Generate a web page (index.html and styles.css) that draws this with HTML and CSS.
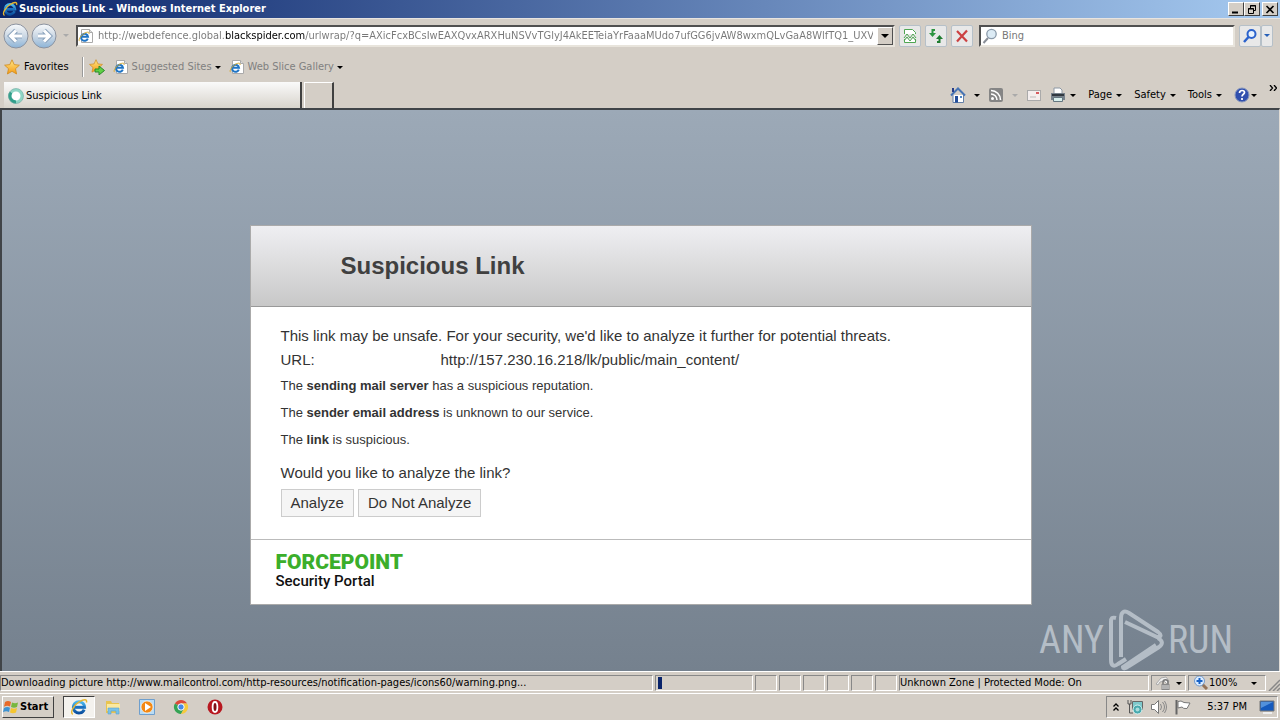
FILE: index.html
```html
<!DOCTYPE html>
<html lang="en">
<head>
    <meta charset="UTF-8">
    <meta name="viewport" content="width=device-width, initial-scale=1.0">
    <title>Suspicious Link - Windows Internet Explorer</title>
    <link rel="stylesheet" href="styles.css">
</head>
<body>
    <!-- shared icons -->
    <svg class="sprite" width="0" height="0" aria-hidden="true">
        <defs>
            <linearGradient id="blue" x1="0" y1="0" x2="0" y2="1"><stop offset="0" stop-color="#49b8f0"/><stop offset="1" stop-color="#0b4f9f"/></linearGradient>
            <linearGradient id="orb" x1="0" y1="0" x2="0" y2="1"><stop offset="0" stop-color="#f8fafc"/><stop offset="0.5" stop-color="#ccd8e4"/><stop offset="1" stop-color="#8cb4d8"/></linearGradient>
            <linearGradient id="gold" x1="0" y1="0" x2="0" y2="1"><stop offset="0" stop-color="#ffe98a"/><stop offset="1" stop-color="#f59a12"/></linearGradient>
        </defs>
        <symbol id="ie" viewBox="0 0 16 16">
            <path d="M12.600 10.300A5 5 0 1 1 13 8.200H4.500" fill="none" stroke="url(#blue)" stroke-width="2.600"/>
            <path d="M4.500 8.200H13" stroke="#1a6fc0" stroke-width="2"/>
            <path d="M2.500 14.500C-.5 13 3.500 6 8.500 3.200 12 1 15.600.6 14.600 4" fill="none" stroke="#e8b730" stroke-width="1.300"/>
        </symbol>
        <symbol id="ie-page" viewBox="0 0 16 16">
            <path d="M3.500 1.500h8l3 3v10h-11z" fill="#fff" stroke="#aaa"/>
            <path d="M11.500 1.500v3h3" fill="#ddd" stroke="#aaa"/>
            <path d="M9.800 10.600A3.500 3.500 0 1 1 10 8.800H3.500" fill="none" stroke="#1f74c4" stroke-width="2"/>
            <path d="M1.500 13C0 12 3 7 7 5c2.800-1.400 4.600-1 4 1" fill="none" stroke="#d8a92c"/>
        </symbol>
        <symbol id="star" viewBox="0 0 16 16">
            <path d="M8 .8l2.200 4.800 5.200.6-3.900 3.500 1.100 5.300L8 12.300 3.400 15l1.100-5.300L.6 6.200l5.200-.6z" fill="url(#gold)" stroke="#d08a1c" stroke-width=".8"/>
        </symbol>
    </svg>

    <header class="titlebar">
        <svg class="icon"><use href="#ie"/></svg>
        <span class="window-title">Suspicious Link - Windows Internet Explorer</span>
        <div class="window-buttons">
            <button class="win-btn" aria-label="Minimize"><svg viewBox="0 0 10 9"><path d="M1 7.500h6" stroke="#000" stroke-width="2"/></svg></button>
            <button class="win-btn" aria-label="Restore"><svg viewBox="0 0 10 9"><path d="M3.500 3V.5h5v5H7M3 1h6M1.500 3.500h5v5h-5zM1 4h6" fill="none" stroke="#000"/></svg></button>
            <button class="win-btn close" aria-label="Close"><svg viewBox="0 0 10 9"><path d="M1.500 1l7 7M8.500 1l-7 7" stroke="#000" stroke-width="1.600"/></svg></button>
        </div>
    </header>

    <div class="address-row">
        <div class="nav">
            <button class="orb" aria-label="Back"><svg viewBox="0 0 26 26"><circle cx="13" cy="13" r="12" fill="url(#orb)" stroke="#8c93a0"/><path d="M19 13H8M13 7.500L7.500 13l5.500 5.500" fill="none" stroke="#8ba3bd" stroke-width="5"/><path d="M19 13H8M13 7.500L7.500 13l5.500 5.500" fill="none" stroke="#fff" stroke-width="3"/></svg></button>
            <button class="orb" aria-label="Forward"><svg viewBox="0 0 26 26"><circle cx="13" cy="13" r="12" fill="url(#orb)" stroke="#8c93a0"/><path d="M7 13h11M13 7.500l5.500 5.500-5.500 5.500" fill="none" stroke="#8ba3bd" stroke-width="5"/><path d="M7 13h11M13 7.500l5.500 5.500-5.500 5.500" fill="none" stroke="#fff" stroke-width="3"/></svg></button>
            <i class="caret faded"></i>
        </div>
        <div class="field address">
            <svg class="icon"><use href="#ie-page"/></svg>
            <input class="url" type="text" aria-label="Address" value="http://webdefence.global.blackspider.com/urlwrap/?q=AXicFcxBCsIwEAXQvxARXHuNSVvTGlyJ4AkEETeiaYrFaaaMUdo7ufGG6jvAW8wxmQLvGaA8WlfTQ1_UXVr2E">
            <button class="drop" aria-label="Show address list"><i class="caret"></i></button>
        </div>
        <button class="tool" aria-label="Compatibility view"><svg viewBox="0 0 16 16"><path d="M2.500 6V1.500h8l3 3V6M2.500 11v3.500h11V11" fill="#fff" stroke="#4fa653"/><path d="M2 10l3-4 3 4 3-4 3 4M2 13l3-4 3 4 3-4 3 4" fill="none" stroke="#4fa653"/></svg></button>
        <button class="tool" aria-label="Refresh"><svg viewBox="0 0 16 16"><path d="M7 2H4.500v4" fill="none" stroke="#2c9440" stroke-width="2"/><path d="M1 5h7L4.500 9z" fill="#2c9440"/><path d="M9 14h2.500v-4" fill="none" stroke="#1e7c30" stroke-width="2"/><path d="M8 11h7l-3.500-4z" fill="#1e7c30"/></svg></button>
        <button class="tool" aria-label="Stop"><svg viewBox="0 0 16 16"><path d="M3 3l10 10.500M13 2.500L3 13.500" stroke="#cc4142" stroke-width="2.200"/></svg></button>
        <div class="field search">
            <svg class="icon" viewBox="0 0 16 16"><circle cx="9.500" cy="6" r="4.700" fill="#dcebf5" stroke="#8a9aaa" stroke-width="1.300"/><path d="M6 10l-4.500 5" stroke="#8a8f98" stroke-width="2"/></svg>
            <input type="text" aria-label="Search" placeholder="Bing">
        </div>
        <div class="find">
            <button class="tool" aria-label="Search"><svg viewBox="0 0 16 16"><circle cx="9.500" cy="6" r="4" fill="#e7f2ff" stroke="#2b62cc" stroke-width="2"/><path d="M6.500 9L2 14" stroke="#2b62cc" stroke-width="2.500"/></svg></button>
            <button class="tool slim" aria-label="Search options"><i class="caret blue"></i></button>
        </div>
    </div>

    <nav class="favorites">
        <button class="flat"><svg class="icon"><use href="#star"/></svg>Favorites</button>
        <span class="divider"></span>
        <button class="flat" aria-label="Add to favorites bar"><svg class="icon" viewBox="0 0 16 16"><use href="#star" width="14" height="14"/><path d="M6 10h4V7l5.500 4.500L10 16v-3H6z" fill="#5fd045" stroke="#29882a"/></svg></button>
        <a class="fav-link" href="#"><svg class="icon"><use href="#ie-page"/></svg>Suggested Sites<i class="caret"></i></a>
        <a class="fav-link" href="#"><svg class="icon"><use href="#ie-page"/></svg>Web Slice Gallery<i class="caret"></i></a>
    </nav>

    <div class="tab-row">
        <button class="tab"><svg class="icon" viewBox="0 0 16 16"><circle cx="8" cy="8" r="6" fill="#fff" stroke="#8ed5c5" stroke-width="3"/><path d="M3 4.500A6 6 0 0 0 8 14" fill="none" stroke="#319f8b" stroke-width="3"/><circle cx="8" cy="8" r="7.500" fill="none" stroke="#71aaa1" stroke-width=".6"/></svg>Suspicious Link</button>
        <button class="new-tab" aria-label="New tab"></button>
        <div class="commands">
            <button class="flat home" aria-label="Home"><svg class="icon" viewBox="0 0 16 16"><path d="M3 8v7.500h10.500V8" fill="#fff" stroke="#6580a8"/><path d="M1 8.500L8 1.500l7 7" fill="none" stroke="#4774b4" stroke-width="2"/><path d="M3 1v4" stroke="#263d88" stroke-width="2"/><path d="M5 9h3v6.500H5z" fill="#234e9a"/><path d="M10 9h2v2h-2z" fill="#5089c8"/></svg><i class="caret"></i></button>
            <button class="flat feeds" aria-label="Feeds"><svg class="icon" viewBox="0 0 16 16"><rect x="1" y="1" width="14" height="14" rx="2" fill="#858585"/><circle cx="4.500" cy="11.500" r="1.500" fill="#fff"/><path d="M3 7a6 6 0 0 1 6 6M3 3.500A9.500 9.500 0 0 1 12.500 13" fill="none" stroke="#fff" stroke-width="1.600"/></svg><i class="caret faded"></i></button>
            <button class="flat mail" aria-label="Read mail"><svg class="icon" viewBox="0 0 16 16"><rect x="1.500" y="3.500" width="13" height="10" fill="#f4eeee" stroke="#aaa"/><path d="M4 10h6" stroke="#bbb"/><path d="M10 5h3v2h-3z" fill="#d75b60"/></svg></button>
            <button class="flat print" aria-label="Print"><svg class="icon" viewBox="0 0 16 16"><path d="M4 7V1h6l2 2v4" fill="#fff" stroke="#8d98a4"/><path d="M1 6h14v7H1z" fill="#77818b"/><path d="M2 8h12" stroke="#303840" stroke-width="2"/><path d="M3.500 10.500h9v4h-9z" fill="#d9efed" stroke="#647680"/></svg><i class="caret"></i></button>
            <button class="flat">Page<i class="caret"></i></button>
            <button class="flat">Safety<i class="caret"></i></button>
            <button class="flat">Tools<i class="caret"></i></button>
            <button class="flat help" aria-label="Help"><svg class="icon" viewBox="0 0 16 16"><circle cx="8" cy="8" r="7" fill="#304fae" stroke="#8797bd"/><path d="M5.500 6c0-3.500 5-3 5-.5 0 1.800-2.500 1.800-2.500 4M8 11v2" fill="none" stroke="#fff" stroke-width="1.700"/></svg><i class="caret"></i></button>
            <button class="flat more" aria-label="More commands"><svg viewBox="0 0 8 6"><path d="M1 0l2.500 3L1 6M5 0l2.500 3L5 6" fill="none" stroke="#000" stroke-width="1.300"/></svg></button>
        </div>
    </div>

    <main class="page">
        <section class="card">
            <h1 class="card-title">Suspicious Link</h1>
            <div class="card-body">
                <p class="lead">This link may be unsafe. For your security, we'd like to analyze it further for potential threats.</p>
                <dl class="lead url-line">
                    <dt>URL:</dt>
                    <dd>http://157.230.16.218/lk/public/main_content/</dd>
                </dl>
                <p class="reason">The <b>sending mail server</b> has a suspicious reputation.</p>
                <p class="reason">The <b>sender email address</b> is unknown to our service.</p>
                <p class="reason">The <b>link</b> is suspicious.</p>
                <p class="lead question">Would you like to analyze the link?</p>
                <div class="actions">
                    <button class="action">Analyze</button>
                    <button class="action">Do Not Analyze</button>
                </div>
            </div>
            <footer class="brand">
                <div class="brand-name">FORCEPOINT</div>
                <div class="brand-sub">Security Portal</div>
            </footer>
        </section>
        <div class="watermark">
            <span>ANY</span>
            <svg viewBox="0 0 56 62"><path d="M8 9C4 8 3 9 3 13v38c0 6 3 7 7 4l8-5M13 48V9c0-6 3-8 8-5l29 19c4 3 3 5-1 5L17 13M50 29c5 3 5 6 1 9L21 57c-4 3-6 3-6 1l33-22" fill="none" stroke="#b4bdc6" stroke-width="4"/></svg>
            <span>RUN</span>
        </div>
    </main>

    <div class="statusbar">
        <span class="pane message">Downloading picture http://www.mailcontrol.com/http-resources/notification-pages/icons60/warning.png...</span>
        <span class="pane progress"><i class="progress-block"></i></span>
        <span class="pane small"></span>
        <span class="pane small"></span>
        <span class="pane small"></span>
        <span class="pane small"></span>
        <span class="pane small"></span>
        <span class="pane small"></span>
        <span class="pane zone">Unknown Zone | Protected Mode: On</span>
        <span class="pane lock"><svg class="icon" viewBox="0 0 16 16"><path d="M1 9l5-6 5-1 3 4-2 3-3-3-4 1-2 3z" fill="#f0f0f0" stroke="#aaa"/><path d="M8 9V7c0-3 5-3 5 0v2" fill="none" stroke="#777" stroke-width="1.500"/><path d="M6.500 9h8v6h-8z" fill="#888"/><path d="M7 11h7M7 13h7" stroke="#ddd"/></svg><i class="caret"></i></span>
        <span class="pane zoom"><svg class="icon" viewBox="0 0 16 16"><path d="M9 9l5 5" stroke="#947357" stroke-width="3"/><circle cx="6.500" cy="6" r="5" fill="#d9ebff" stroke="#739acb"/><path d="M6.500 3v6M3.500 6h6" stroke="#1762c6" stroke-width="2"/></svg>100%<i class="caret"></i></span>
        <svg class="grip" viewBox="0 0 12 12"><path d="M1 12L12 1M5 12l7-7M9 12l3-3" stroke="#888" stroke-width="1.500"/></svg>
    </div>

    <footer class="taskbar">
        <button class="start"><svg class="icon" viewBox="0 0 16 16"><path d="M2 3q3-2 6 0L7 7.500q-3-1.500-6 .3z" fill="#e86927"/><path d="M9 3.500q3 1.500 6 0L14 8q-3 1.500-6 0z" fill="#77b73f"/><path d="M1 9q3-1.800 6-.3L6 13q-3-1.700-6 .2z" fill="#3d92d1"/><path d="M8 9q3 1.500 6 0l-1 4.500q-3 1.500-6 0z" fill="#f5c52f"/></svg>Start</button>
        <button class="task active" aria-label="Internet Explorer"><svg class="icon"><use href="#ie"/></svg></button>
        <button class="task" aria-label="Explorer"><svg class="icon" viewBox="0 0 16 16"><path d="M1 2h5l1 2h7v10H1z" fill="#e8c450"/><path d="M2 5h13v7H2z" fill="#fbe99f"/><path d="M3 15V9h11v6h-3v-3H6v3z" fill="#78c2e8" stroke="#5aa1cf" stroke-width=".6"/></svg></button>
        <button class="task" aria-label="Media Player"><svg class="icon" viewBox="0 0 16 16"><path d="M.5.500h15v15H.5z" fill="#b9dcf4" stroke="#6f9fcd"/><circle cx="8" cy="8" r="6" fill="#f38812" stroke="#fff" stroke-width=".6"/><path d="M6 4l6 4-6 4z" fill="#fff"/></svg></button>
        <button class="task" aria-label="Chrome"><svg class="icon" viewBox="0 0 16 16"><path d="M8 8L1.900 4.500A7 7 0 0 1 14.100 4.500H8z" fill="#dc4939"/><path d="M8 8L1.900 4.500A7 7 0 0 0 8 15l3-5.200z" fill="#35a354"/><path d="M8 8l3 1.800L8 15a7 7 0 0 0 6.100-10.500H8z" fill="#f6ca3c"/><circle cx="8" cy="8" r="3.200" fill="#4589e8" stroke="#fff"/></svg></button>
        <button class="task" aria-label="Opera"><svg class="icon" viewBox="0 0 16 16"><circle cx="8" cy="8" r="7.500" fill="#b81820"/><ellipse cx="8" cy="8" rx="2.400" ry="5" fill="#811016" stroke="#fff" stroke-width="1.800"/></svg></button>
        <div class="tray">
            <svg class="chevrons" viewBox="0 0 6 8"><path d="M.5 3.500L3 1l2.500 2.500M.5 7.500L3 5l2.500 2.500" fill="none" stroke="#000" stroke-width="1.300"/></svg>
            <svg class="icon" viewBox="0 0 16 16"><path d="M1 1v4h3V1M2.500 5v9H6" fill="none" stroke="#555"/><path d="M5.500 2.500h10v8h-10z" fill="#7cc8cb" stroke="#666"/><circle cx="10.500" cy="10.500" r="4.500" fill="#48a9ae" stroke="#d6f0ee"/><circle cx="10.500" cy="10.500" r="2" fill="#a9dcdc"/></svg>
            <svg class="icon" viewBox="0 0 16 16"><path d="M.5 5.500h3l4-4v13l-4-4h-3z" fill="#fff" stroke="#777"/><path d="M9.500 5q2 3 0 6M11.500 3q4 5 0 10M13.500 2q4 6 0 12" fill="none" stroke="#888"/></svg>
            <svg class="icon" viewBox="0 0 16 16"><path d="M1.500 1v14.500" stroke="#666" stroke-width="2"/><path d="M3 2.500q3-1.500 6 1l6 .5-3 5.500q-4 .5-5-1.500L3 9z" fill="#fff" stroke="#777"/></svg>
            <time class="clock">5:37 PM</time>
            <svg class="icon" viewBox="0 0 16 16"><path d="M1 2h14v10H1z" fill="#155abd" stroke="#777"/><path d="M2 3h12L2 9z" fill="#5291dc"/><path d="M4 14h9" stroke="#eee" stroke-width="2"/></svg>
        </div>
    </footer>
</body>
</html>
```
FILE: styles.css
```css
* {
    box-sizing: border-box;
}

body {
    margin: 0;
    min-height: 100vh;
    display: flex;
    flex-direction: column;
    background: #d4cec6;
    color: #000;
    font-family: "DejaVu Sans Condensed", "DejaVu Sans", sans-serif;
    font-size: 11px;
    line-height: 14px;
}

button, input {
    font: inherit;
    color: inherit;
    margin: 0;
    padding: 0;
}

.sprite {
    position: absolute;
}

.icon {
    width: 16px;
    height: 16px;
    flex: none;
}

.caret {
    flex: none;
    border: 3px solid transparent;
    border-top-color: #000;
    border-bottom: 0;
}

.caret.faded {
    border-top-color: #aaa;
}

.caret.blue {
    border-top-color: #2760b8;
}

/* title bar */
.titlebar {
    height: 18px;
    display: flex;
    align-items: center;
    padding: 0 2px;
    background: linear-gradient(to right, #0a246a, #a6caf0);
    color: #fff;
    font-weight: bold;
}

.window-title {
    flex: 1;
    padding-left: 1px;
}

.window-buttons {
    display: flex;
}

.win-btn {
    width: 16px;
    height: 14px;
    display: flex;
    align-items: center;
    justify-content: center;
    background: #d4cec6;
    border: 1px solid;
    border-color: #fff #404040 #404040 #fff;
}

.win-btn.close {
    margin-left: 2px;
}

.win-btn svg {
    width: 10px;
    height: 9px;
}

/* address row */
.address-row {
    height: 36px;
    display: flex;
    align-items: center;
    gap: 4px;
    padding: 0 7px 2px 3px;
    border-top: 1px solid #e8e4e0;
}

.nav {
    width: 69px;
    display: flex;
    align-items: center;
    gap: 2px;
}

.nav .caret {
    margin-left: 4px;
}

.orb {
    width: 26px;
    height: 26px;
    border: 0;
    background: none;
}

.orb svg {
    display: block;
}

.field {
    height: 22px;
    display: flex;
    align-items: center;
    background: #fff;
    border: 2px solid;
    border-color: #505050 #e8e4dc #e8e4dc #505050;
}

.field input {
    flex: 1;
    min-width: 0;
    height: 16px;
    border: 0;
    outline: 0;
    background: none;
}

.address {
    flex: 1;
    min-width: 0;
    gap: 4px;
}

/* the domain is darker than the rest of the url */
.address .url {
    color: transparent;
    background: linear-gradient(to right, #777 127px, #000 127px, #000 207px, #777 207px);
    -webkit-background-clip: text;
    background-clip: text;
}

.drop {
    width: 16px;
    height: 18px;
    display: flex;
    align-items: center;
    justify-content: center;
    background: #d4cec6;
    border: 1px solid;
    border-color: #fff #505050 #505050 #fff;
}

.drop .caret {
    border-width: 4px 4px 0;
}

.tool {
    width: 22px;
    height: 22px;
    display: flex;
    align-items: center;
    justify-content: center;
    background: #e8e8e8;
    border: 1px solid #b6c0c8;
    border-radius: 2px;
}

.tool svg {
    width: 16px;
    height: 16px;
}

.search {
    width: 256px;
    gap: 4px;
    margin-left: 2px;
    padding-left: 1px;
}

.search input::placeholder {
    color: #777;
    opacity: 1;
}

.find {
    display: flex;
}

.tool.slim {
    width: 12px;
}

/* favorites bar */
.flat {
    display: flex;
    align-items: center;
    gap: 4px;
    border: 0;
    background: none;
}

.favorites {
    height: 28px;
    display: flex;
    align-items: center;
    padding: 0 4px 2px;
}

.divider {
    height: 20px;
    margin: 0 5px 0 13px;
    border-left: 1px solid #999;
    border-right: 1px solid #fff;
}

.fav-link {
    display: flex;
    align-items: center;
    gap: 3px;
    margin-left: 8px;
    color: #808080;
    text-decoration: none;
}

/* tabs and command bar */
.tab-row {
    height: 26px;
    display: flex;
    padding: 0 3px 0 4px;
}

.tab {
    width: 298px;
    display: flex;
    align-items: center;
    gap: 2px;
    padding: 2px 4px 0;
    border: 0;
    border-right: 2px solid #404040;
    background: linear-gradient(#fafafa, #d8d4cc);
    text-align: left;
}

.new-tab {
    width: 30px;
    margin-left: 2px;
    background: none;
    border: 1px solid #fff;
    border-right: 2px solid #404040;
    border-bottom: 0;
}

.commands {
    margin-left: auto;
    display: flex;
    align-items: center;
    gap: 12px;
}

.feeds,
.home {
    gap: 8px;
}

.home,
.mail,
.feeds {
    margin-right: -4px;
}

.help {
    gap: 1px;
}

.more {
    align-self: flex-start;
    padding-top: 3px;
}

.more svg {
    width: 8px;
    height: 6px;
}

/* blocked page */
.page {
    position: relative;
    flex: 1;
    display: flex;
    flex-direction: column;
    align-items: center;
    padding: 48px 16px 0;
    background: linear-gradient(#9ca9b7, #75818e);
    border: 2px solid #404448;
    border-right: 1px solid #e0dcd6;
    border-bottom: 0;
    font-family: "Liberation Sans", Arial, sans-serif;
    color: #333;
}

.page p,
.page dl,
.page dd {
    margin: 0;
}

.card {
    width: 100%;
    max-width: 782px;
    margin: auto 0;
    background: #fff;
    border: 1px solid #aaa;
}

.card-title {
    margin: 0;
    padding: 24px 20px 24px 90px;
    font-size: 24px;
    line-height: 32px;
    border-bottom: 1px solid #999;
    background: linear-gradient(#efeff2, #c8c8c8);
    color: #404040;
}

.card-body {
    padding: 17px 30px 22px;
}

.lead {
    font-size: 15px;
    line-height: 24px;
}

.url-line {
    display: flex;
}

.url-line dt {
    width: 160px;
}

.reason {
    font-size: 13px;
    line-height: 27px;
}

.question {
    padding-top: 8px;
}

.actions {
    display: flex;
    gap: 4px;
    padding-top: 4px;
}

.action {
    height: 28px;
    padding: 0 9px;
    font-size: 15px;
    background: #f5f5f5;
    border: 1px solid #ccc;
}

.brand {
    height: 65px;
    padding: 11px 25px;
    border-top: 1px solid #bbb;
    font-family: Roboto, "Liberation Sans", sans-serif;
}

.brand-name {
    font-size: 21px;
    line-height: 22px;
    font-weight: 900;
    color: #3bae2b;
}

.brand-sub {
    font-size: 15px;
    line-height: 16px;
    font-weight: 500;
    color: #111;
}

.watermark {
    position: absolute;
    right: 46px;
    bottom: 0;
    display: flex;
    align-items: center;
    gap: 4px;
    font-family: "Roboto Condensed", "Liberation Sans Narrow", "DejaVu Sans Condensed", sans-serif;
    font-size: 38px;
    line-height: 60px;
    color: #b4bdc6;
}

.watermark svg {
    width: 56px;
    height: 62px;
}

/* status bar */
.statusbar {
    height: 23px;
    display: flex;
    gap: 2px;
    padding: 3px 0 2px;
    border-top: 1px solid #fff;
    border-bottom: 1px solid #fff;
}

.pane {
    display: flex;
    align-items: center;
    white-space: nowrap;
    overflow: hidden;
    border: 1px solid;
    border-color: #888 #fff #fff #888;
}

.message {
    flex: 1;
}

.progress {
    width: 98px;
    padding-left: 2px;
}

.progress-block {
    width: 4px;
    height: 12px;
    background: #0a246a;
}

.small {
    width: 22px;
}

.zone {
    width: 250px;
}

.lock {
    width: 35px;
    gap: 5px;
    padding-left: 3px;
}

.zoom {
    width: 78px;
    padding: 0 8px 0 4px;
}

.zoom .caret {
    margin-left: auto;
}

.grip {
    width: 12px;
    height: 12px;
    align-self: flex-end;
}

/* taskbar */
.taskbar {
    height: 26px;
    display: flex;
    align-items: center;
    gap: 2px;
    padding: 0 2px;
}

.start {
    width: 52px;
    height: 22px;
    display: flex;
    align-items: center;
    gap: 1px;
    margin-right: 7px;
    font-weight: bold;
    background: none;
    border: 1px solid;
    border-color: #fff #404040 #404040 #fff;
}

.task {
    width: 32px;
    height: 22px;
    display: flex;
    align-items: center;
    justify-content: center;
    background: none;
    border: 0;
}

.task.active {
    background: #f4f2ee;
    border: 1px solid;
    border-color: #404040 #fff #fff #404040;
}

.task.active .icon {
    width: 18px;
    height: 18px;
}

.tray {
    height: 22px;
    margin-left: auto;
    display: flex;
    align-items: center;
    gap: 8px;
    padding: 0 2px 0 6px;
    border: 1px solid;
    border-color: #888 #fff #fff #888;
}

.chevrons {
    width: 6px;
    height: 8px;
}

.clock {
    padding: 0 4px 0 8px;
}
```
